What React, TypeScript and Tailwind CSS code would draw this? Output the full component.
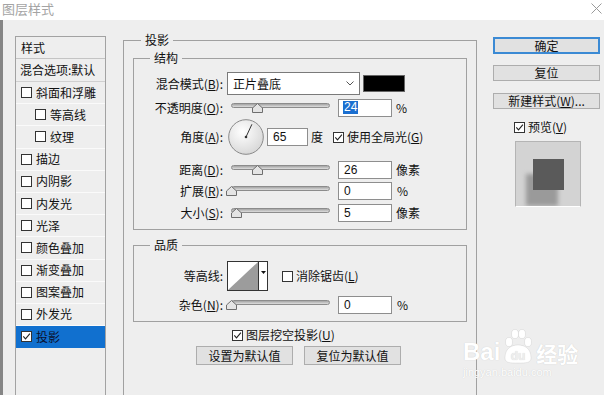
import React from "react";

const CJK = '"Noto Sans CJK SC", "Noto Sans", sans-serif';

function Check({ checked = false }: { checked?: boolean }) {
  return (
    <span className="inline-flex w-[11px] h-[11px] shrink-0 items-center justify-center border border-[#333] bg-white">
      {checked && (
        <svg width="9" height="9" viewBox="0 0 9 9">
          <path d="M1.3 4.4 L3.5 6.9 L7.9 1.6" fill="none" stroke="#222" strokeWidth="1.1" />
        </svg>
      )}
    </span>
  );
}

function Slider({ thumb }: { thumb: number }) {
  return (
    <div className="relative w-[99px] h-[10px] shrink-0 ml-[8px]">
      <div className="h-[5px] rounded-full border border-[#8c8c8c] bg-gradient-to-b from-[#a4a4a4] to-[#dedede]" />
      <svg className="absolute top-0" style={{ left: thumb }} width="11" height="10" viewBox="0 0 11 10">
        <path d="M0.5 9.5 V5 L5.5 0.5 L10.5 5 V9.5 Z" fill="#e4e4e4" stroke="#6e6e6e" />
      </svg>
    </div>
  );
}

function Num({ v, w = 54, sel = false, ml = 8 }: { v: string; w?: number; sel?: boolean; ml?: number }) {
  const wc = w === 54 ? "w-[54px]" : "w-[41px]";
  const mlc = ml === 8 ? "ml-[8px]" : "ml-[3px]";
  return (
    <div className={`${wc} ${mlc} h-[18px] shrink-0 border border-[#8e8e8e] bg-white pl-[4px] flex items-center text-[12px] text-[#111]`} style={{ fontFamily: '"Liberation Sans", sans-serif' }}>
      {sel ? <span className="bg-[#1b6fd0] text-white px-[1px] leading-[13px]">{v}</span> : <span className="px-[1px]">{v}</span>}
    </div>
  );
}

function Label({ children }: { children: React.ReactNode }) {
  return <div className="w-[89px] shrink-0 text-right text-[12px] text-[#111] leading-none">{children}</div>;
}

function Legend({ children }: { children: React.ReactNode }) {
  return <legend className="ml-[16px] px-[4px] text-[12px] leading-[16px] text-[#111]">{children}</legend>;
}

function Btn({ children, primary = false, w = "w-[107px]", h = "h-[16px]" }: { children: React.ReactNode; primary?: boolean; w?: string; h?: string }) {
  return (
    <div
      className={`${w} ${h} flex items-center justify-center text-[12px] text-[#111] bg-[#e1e1e1] ${primary ? "border-2 border-[#3b8ad4]" : "border border-[#adadad]"}`}
    >
      {children}
    </div>
  );
}

const listItems: { t: string; indent?: boolean; checked?: boolean; sel?: boolean }[] = [
  { t: "斜面和浮雕" },
  { t: "等高线", indent: true },
  { t: "纹理", indent: true },
  { t: "描边" },
  { t: "内阴影" },
  { t: "内发光" },
  { t: "光泽" },
  { t: "颜色叠加" },
  { t: "渐变叠加" },
  { t: "图案叠加" },
  { t: "外发光" },
  { t: "投影", checked: true, sel: true },
];

export default function App() {
  return (
    <div className="w-[604px] h-[395px] overflow-hidden bg-[#eeeeee] flex flex-col relative" style={{ fontFamily: CJK }}>
      {/* title bar */}
      <div className="h-[20px] shrink-0 bg-white flex items-center justify-between pl-[2px] pr-[2px]">
        <span className="text-[13px] text-[#a4a4a4] leading-none pb-[3px]">图层样式</span>
        <svg width="11" height="11" viewBox="0 0 11 11" className="mb-[3px]">
          <path d="M0.5 0.5 L10.5 10.5 M10.5 0.5 L0.5 10.5" stroke="#9a9a9a" strokeWidth="1" />
        </svg>
      </div>

      <div className="flex flex-1 min-h-0">
        <div className="w-[3px] shrink-0 bg-[#858585]" />

        {/* style list */}
        <div className="ml-[12px] mt-[16px] w-[91px] h-[400px] shrink-0 border border-[#a2a2a2] text-[12px] text-[#111]">
          <div className="h-[22px] flex items-center pl-[5px] border-b border-[#c4c4c4]">样式</div>
          <div className="h-[23px] flex items-center pl-[4px] border-b border-[#d0d0d0]">混合选项:默认</div>
          {listItems.map((it) => (
            <div
              key={it.t}
              className={`h-[22.2px] flex items-center border-b ${it.sel ? "bg-[#1170cf] border-[#1170cf] text-[#0b1030]" : "border-[#fafafa]"} ${it.indent ? "pl-[19px]" : "pl-[5px]"}`}
            >
              <Check checked={it.checked} />
              <span className="ml-[4px]">{it.t}</span>
            </div>
          ))}
        </div>

        {/* main group */}
        <fieldset className="ml-[17px] mt-[12px] w-[354px] h-[420px] shrink-0 border border-[#a0a0a0]">
          <legend className="ml-[17px] px-[4px] text-[12px] leading-[16px] text-[#111]">投影</legend>

          {/* 结构 */}
          <fieldset className="ml-[9px] mt-[2px] w-[334px] border border-[#a0a0a0] pt-[6px] pb-[7px]">
            <Legend>结构</Legend>
            <div className="h-[23px] flex items-center">
              <Label>
                混合模式(<u>B</u>):
              </Label>
              <div className="ml-[4px] w-[133px] h-[23px] border border-[#7a7a7a] bg-white flex items-center justify-between pl-[5px] pr-[5px] text-[12px] text-[#111]">
                <span>正片叠底</span>
                <svg width="8" height="5" viewBox="0 0 8 5">
                  <path d="M0.5 0.5 L4 4 L7.5 0.5" fill="none" stroke="#555" strokeWidth="1" />
                </svg>
              </div>
              <div className="ml-[3px] w-[42px] h-[17px] bg-black border border-[#666]" />
            </div>

            <div className="mt-[3px] h-[19px] flex items-center">
              <Label>
                不透明度(<u>O</u>):
              </Label>
              <Slider thumb={21} />
              <Num v="24" sel />
              <span className="ml-[4px] text-[12px] text-[#111]">%</span>
            </div>

            <div className="mt-[2px] h-[36px] flex items-center">
              <Label>
                角度(<u>A</u>):
              </Label>
              <svg className="ml-[5px] shrink-0" width="36" height="36" viewBox="0 0 36 36">
                <defs>
                  <radialGradient id="dg" cx="40%" cy="35%" r="70%">
                    <stop offset="0%" stopColor="#ffffff" />
                    <stop offset="100%" stopColor="#d6d6d6" />
                  </radialGradient>
                </defs>
                <circle cx="18" cy="18" r="17.3" fill="url(#dg)" stroke="#8a8a8a" strokeWidth="1" />
                <line x1="18" y1="18" x2="23.9" y2="5.3" stroke="#333" strokeWidth="1" />
                <circle cx="18" cy="18" r="1.3" fill="#333" />
              </svg>
              <Num v="65" w={41} ml={3} />
              <span className="ml-[3px] text-[12px] text-[#111]">度</span>
              <span className="ml-[10px] flex items-center">
                <Check checked />
              </span>
              <span className="ml-[3px] text-[12px] text-[#111]">
                使用全局光(<u>G</u>)
              </span>
            </div>

            <div className="mt-[6px] h-[18px] flex items-center">
              <Label>
                距离(<u>D</u>):
              </Label>
              <Slider thumb={21} />
              <Num v="26" />
              <span className="ml-[4px] text-[12px] text-[#111]">像素</span>
            </div>

            <div className="mt-[3px] h-[18px] flex items-center">
              <Label>
                扩展(<u>R</u>):
              </Label>
              <Slider thumb={-5} />
              <Num v="0" />
              <span className="ml-[5px] text-[12px] text-[#111]">%</span>
            </div>

            <div className="mt-[4px] h-[18px] flex items-center">
              <Label>
                大小(<u>S</u>):
              </Label>
              <Slider thumb={0} />
              <Num v="5" />
              <span className="ml-[4px] text-[12px] text-[#111]">像素</span>
            </div>
          </fieldset>

          {/* 品质 */}
          <fieldset className="ml-[9px] mt-[7px] w-[334px] border border-[#a0a0a0] pt-[8px] pb-[7px]">
            <Legend>品质</Legend>
            <div className="h-[30px] flex items-center">
              <Label>等高线:</Label>
              <div className="ml-[4px] w-[41px] h-[30px] border border-[#333] bg-white flex shrink-0">
                <svg width="30" height="28" viewBox="0 0 30 28" className="shrink-0">
                  <rect x="0" y="0" width="30" height="28" fill="#ffffff" />
                  <path d="M0 28 L30 0 L30 28 Z" fill="#9c9c9c" />
                </svg>
                <div className="flex-1 border-l border-[#333] flex items-start justify-center pt-[9px] bg-white">
                  <svg width="5" height="3" viewBox="0 0 5 3">
                    <path d="M0 0 L5 0 L2.5 3 Z" fill="#111" />
                  </svg>
                </div>
              </div>
              <span className="ml-[14px] flex items-center">
                <Check />
              </span>
              <span className="ml-[3px] text-[12px] text-[#111]">
                消除锯齿(<u>L</u>)
              </span>
            </div>
            <div className="mt-[5px] h-[18px] flex items-center">
              <Label>
                杂色(<u>N</u>):
              </Label>
              <Slider thumb={-5} />
              <Num v="0" />
              <span className="ml-[5px] text-[12px] text-[#111]">%</span>
            </div>
          </fieldset>

          <div className="mt-[7px] ml-[108px] h-[12px] flex items-center">
            <Check checked />
            <span className="ml-[3px] text-[12px] text-[#111]">
              图层挖空投影(<u>U</u>)
            </span>
          </div>
          <div className="mt-[5px] ml-[72px] flex gap-[11px]">
            <Btn w="w-[97px]" h="h-[19px]">设置为默认值</Btn>
            <Btn w="w-[97px]" h="h-[19px]">复位为默认值</Btn>
          </div>
        </fieldset>

        {/* right column */}
        <div className="ml-[16px] mt-[17px] w-[107px] shrink-0 flex flex-col">
          <Btn primary h="h-[17px]">
            确定
          </Btn>
          <div className="mt-[11px]">
            <Btn>复位</Btn>
          </div>
          <div className="mt-[12px]">
            <Btn>
              新建样式(<u>W</u>)...
            </Btn>
          </div>
          <div className="mt-[12px] ml-[21px] h-[12px] flex items-center">
            <Check checked />
            <span className="ml-[3px] text-[12px] text-[#111]">
              预览(<u>V</u>)
            </span>
          </div>
          <div className="mt-[8px] ml-[22px] w-[66px] h-[66px] border border-[#b4b4b4] border-b-white bg-[#d3d3d3] relative overflow-hidden">
            <div className="absolute left-[10px] top-[32px] w-[32px] h-[32px] bg-[#9a9a9a] blur-[2px]" />
            <div className="absolute left-[17px] top-[17px] w-[31px] h-[31px] bg-[#5a5a5a]" />
          </div>
        </div>
      </div>

      {/* watermark */}
      <div className="absolute left-[463px] top-[328px] flex flex-col items-start pointer-events-none" style={{ textShadow: "0 0 1px rgba(0,0,0,0.18)" }}>
        <div className="flex items-end h-[36px]">
          <span className="text-[24px] font-bold text-white leading-none" style={{ fontFamily: '"Liberation Sans", sans-serif' }}>
            Bai
          </span>
          <svg width="34" height="36" viewBox="0 0 34 36" className="mx-[1px]">
            <g fill="#ffffff" stroke="rgba(0,0,0,0.12)" strokeWidth="0.6">
              <ellipse cx="8" cy="14" rx="3.5" ry="4.5" />
              <ellipse cx="14" cy="6" rx="3.5" ry="4.5" />
              <ellipse cx="21" cy="6" rx="3.5" ry="4.5" />
              <ellipse cx="27" cy="14" rx="3.5" ry="4.5" />
              <path d="M4 30 C4 20 11 17 17 17 C23 17 30 20 30 30 C30 35 25 35 17 35 C9 35 4 35 4 30 Z" />
            </g>
            <text x="17" y="32" textAnchor="middle" fontSize="12" fontWeight="bold" fill="#eeeeee" fontFamily="Liberation Sans">du</text>
          </svg>
          <span className="text-[21px] font-bold text-white leading-none">经验</span>
        </div>
        <span className="mt-[3px] text-[11px] text-white leading-none" style={{ fontFamily: '"Liberation Sans", sans-serif' }}>
          jingyan.baidu.com
        </span>
      </div>
    </div>
  );
}
